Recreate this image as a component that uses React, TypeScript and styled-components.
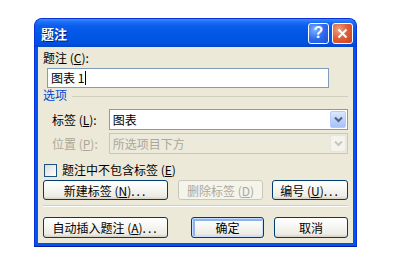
import React from 'react'
import styled, { createGlobalStyle, css } from 'styled-components'

const GlobalStyle = createGlobalStyle`
  html, body {
    margin: 0;
    padding: 0;
    background: #ffffff;
  }
  body {
    font-family: 'Noto Sans CJK SC', 'Liberation Sans', sans-serif;
    font-size: 12px;
    color: #000000;
    white-space: nowrap;
  }
  #root {
    padding: 18px 0 0 34px;
  }
`

const Window = styled.div`
  box-sizing: border-box;
  width: 323px;
  display: flex;
  flex-direction: column;
  border: 1px solid #0831d9;
  border-bottom-color: #001ea0;
  border-radius: 8px 8px 0 0;
  background: #0055ea;
`

const TitleBar = styled.div`
  height: 28px;
  display: flex;
  align-items: center;
  padding: 0 3px 0 6px;
  border-radius: 7px 7px 0 0;
  background: linear-gradient(
    to bottom,
    #3d8eff 0%,
    #1f70f7 10%,
    #0a5ded 25%,
    #0256e6 55%,
    #0053e1 85%,
    #0046cc 100%
  );
`

const Title = styled.div`
  flex: 1;
  color: #ffffff;
  font-size: 13px;
  font-weight: bold;
  text-shadow: 1px 1px 0 #0a1b7a;
`

const CaptionButtons = styled.div`
  display: flex;
  gap: 3px;
`

const CaptionButton = styled.div<{ $close?: boolean }>`
  box-sizing: border-box;
  width: 21px;
  height: 21px;
  border: 1px solid #ffffff;
  border-radius: 3px;
  display: flex;
  align-items: center;
  justify-content: center;
  color: #ffffff;
  font-family: 'Liberation Sans', sans-serif;
  font-weight: bold;
  font-size: 16px;
  background: ${(p) =>
    p.$close
      ? 'radial-gradient(circle at 30% 30%, #f0a080 0%, #e0603a 45%, #c8401c 100%)'
      : 'radial-gradient(circle at 30% 30%, #7fb0ff 0%, #2c6cf0 50%, #1d50d8 100%)'};
`

const Body = styled.div`
  margin: 0 3px 3px;
  padding: 0 5px 5px;
  background: #ece9d8;
  display: flex;
  flex-direction: column;
`

const FieldLabel = styled.div`
  margin-top: 4px;
  line-height: 14px;
`

const TextInput = styled.div`
  box-sizing: border-box;
  margin: 3px 0 0 4px;
  width: 282px;
  height: 20px;
  border: 1px solid #7f9db9;
  background: #ffffff;
  padding-left: 3px;
  line-height: 18px;
  display: flex;
  align-items: center;
`

const Caret = styled.span`
  display: inline-block;
  width: 1px;
  height: 14px;
  margin-left: 1px;
  background: #000000;
`

const GroupHeader = styled.div`
  display: flex;
  align-items: center;
  gap: 5px;
  line-height: 14px;
  color: #0046d5;

  &::after {
    content: '';
    flex: 1;
    height: 1px;
    margin-top: 3px;
    background: #d0d0bf;
  }
`

const FormRow = styled.div<{ $top: number }>`
  display: flex;
  align-items: center;
  margin-top: ${(p) => p.$top}px;
  padding-left: 9px;
`

const RowLabel = styled.div<{ $disabled?: boolean }>`
  width: 57px;
  color: ${(p) => (p.$disabled ? '#aca899' : '#000000')};
`

const Combo = styled.div<{ $disabled?: boolean }>`
  box-sizing: border-box;
  width: 240px;
  height: 21px;
  display: flex;
  align-items: center;
  border: 1px solid ${(p) => (p.$disabled ? '#c9c7ba' : '#7f9db9')};
  background: ${(p) => (p.$disabled ? '#ebeadb' : '#ffffff')};
  color: ${(p) => (p.$disabled ? '#aca899' : '#000000')};
`

const ComboText = styled.div`
  flex: 1;
  padding-left: 3px;
`

const ComboArrow = styled.div<{ $disabled?: boolean }>`
  box-sizing: border-box;
  width: 16px;
  height: 17px;
  margin-right: 1px;
  border-radius: 2px;
  display: flex;
  align-items: center;
  justify-content: center;
  ${(p) =>
    p.$disabled
      ? css`
          border: 1px solid #e8e6dc;
          background: #f4f3ee;
        `
      : css`
          border: 1px solid #b6cbf5;
          background: linear-gradient(to bottom, #dce8fd, #b9cff9 60%, #a8c2f6);
        `}
`

const CheckRow = styled.label`
  display: flex;
  align-items: center;
  gap: 5px;
  margin-top: 9px;
  padding-left: 1px;
  line-height: 14px;
`

const CheckBox = styled.span`
  box-sizing: border-box;
  width: 13px;
  height: 13px;
  border: 1px solid #1c5180;
  background: linear-gradient(135deg, #dcdcd7, #ffffff);
`

const ButtonRow = styled.div<{ $top: number }>`
  display: flex;
  margin-top: ${(p) => p.$top}px;
`

const Button = styled.div<{
  $w: number
  $h: number
  $gap?: number
  $push?: boolean
  $disabled?: boolean
  $default?: boolean
}>`
  box-sizing: border-box;
  width: ${(p) => p.$w}px;
  height: ${(p) => p.$h}px;
  margin-left: ${(p) => (p.$push ? 'auto' : `${p.$gap ?? 0}px`)};
  display: flex;
  align-items: center;
  justify-content: center;
  border-radius: 3px;
  ${(p) =>
    p.$disabled
      ? css`
          border: 1px solid #c9c7ba;
          background: #f5f4ea;
          color: #aca899;
        `
      : css`
          border: 1px solid #003c74;
          background: linear-gradient(to bottom, #ffffff 0%, #f7f7f4 40%, #ecebe4 85%, #d6d0c5 100%);
          color: #000000;
        `}
  ${(p) =>
    p.$default &&
    css`
      box-shadow: inset 0 0 0 1px #c8dcfc, inset 1px 1px 0 2px #8eb2ee;
    `}
`

const Dots = styled.span`
  letter-spacing: 2px;
`

const Separator = styled.div`
  margin-top: 5px;
  height: 0;
  border-top: 1px solid #d0d0bf;
  border-bottom: 1px solid #ffffff;
`

const Chevron = ({ color }: { color: string }) => (
  <svg width="9" height="7" viewBox="0 0 9 7">
    <path d="M1 1.5 L4.5 5 L8 1.5" fill="none" stroke={color} strokeWidth="2" />
  </svg>
)

export default function App() {
  return (
    <>
      <GlobalStyle />
      <Window>
        <TitleBar>
          <Title>题注</Title>
          <CaptionButtons>
            <CaptionButton>?</CaptionButton>
            <CaptionButton $close>
              <svg width="11" height="11" viewBox="0 0 11 11">
                <path d="M1.5 1.5 L9.5 9.5 M9.5 1.5 L1.5 9.5" stroke="#ffffff" strokeWidth="2" />
              </svg>
            </CaptionButton>
          </CaptionButtons>
        </TitleBar>
        <Body>
          <FieldLabel>
            题注 (<u>C</u>):
          </FieldLabel>
          <TextInput>
            图表 1<Caret />
          </TextInput>
          <GroupHeader>选项</GroupHeader>
          <FormRow $top={7}>
            <RowLabel>
              标签 (<u>L</u>):
            </RowLabel>
            <Combo>
              <ComboText>图表</ComboText>
              <ComboArrow>
                <Chevron color="#4d6185" />
              </ComboArrow>
            </Combo>
          </FormRow>
          <FormRow $top={3}>
            <RowLabel $disabled>
              位置 (<u>P</u>):
            </RowLabel>
            <Combo $disabled>
              <ComboText>所选项目下方</ComboText>
              <ComboArrow $disabled>
                <Chevron color="#c9c7ba" />
              </ComboArrow>
            </Combo>
          </FormRow>
          <CheckRow>
            <CheckBox />
            <span>
              题注中不包含标签 (<u>E</u>)
            </span>
          </CheckRow>
          <ButtonRow $top={3}>
            <Button $w={125} $h={20}>
              新建标签 (<u>N</u>)<Dots>...</Dots>
            </Button>
            <Button $w={85} $h={20} $gap={10} $disabled>
              删除标签 (<u>D</u>)
            </Button>
            <Button $w={76} $h={20} $push>
              编号 (<u>U</u>)<Dots>...</Dots>
            </Button>
          </ButtonRow>
          <Separator />
          <ButtonRow $top={10}>
            <Button $w={125} $h={21}>
              自动插入题注 (<u>A</u>)<Dots>...</Dots>
            </Button>
            <Button $w={73} $h={21} $push $default>
              确定
            </Button>
            <Button $w={74} $h={21} $gap={10}>
              取消
            </Button>
          </ButtonRow>
        </Body>
      </Window>
    </>
  )
}
